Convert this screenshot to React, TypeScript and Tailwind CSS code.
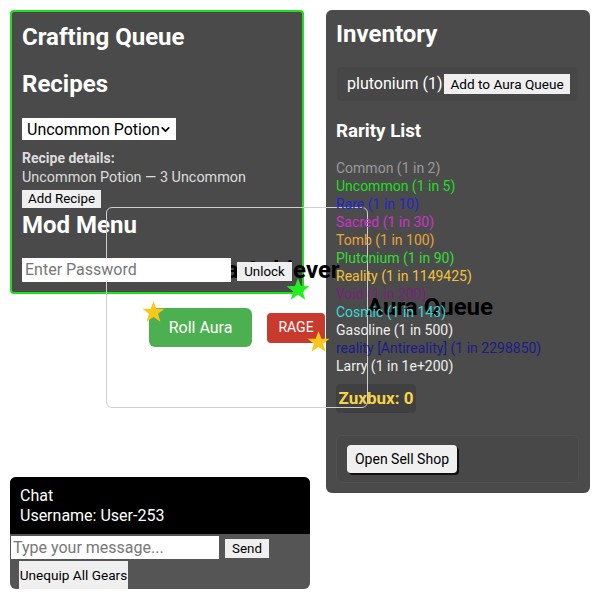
import { ChevronDown } from "lucide-react";

const RARITIES: { name: string; color: string }[] = [
  { name: "Common (1 in 2)", color: "text-[#9a9a9a]" },
  { name: "Uncommon (1 in 5)", color: "text-[#22dd22]" },
  { name: "Rare (1 in 10)", color: "text-[#2424d0]" },
  { name: "Sacred (1 in 30)", color: "text-[#cc33cc]" },
  { name: "Tomb (1 in 100)", color: "text-[#e8a43a]" },
  { name: "Plutonium (1 in 90)", color: "text-[#33dd33]" },
  { name: "Reality (1 in 1149425)", color: "text-[#f2c23a]" },
  { name: "Void (1 in 200)", color: "text-[#7d1f7d]" },
  { name: "Cosmic (1 in 143)", color: "text-[#3ad8d8]" },
  { name: "Gasoline (1 in 500)", color: "text-[#eeeeee]" },
  { name: "reality [Antireality] (1 in 2298850)", color: "text-[#1c1c88]" },
  { name: "Larry (1 in 1e+200)", color: "text-[#eeeeee]" },
];

function Star({ className }: { className: string }) {
  return (
    <svg viewBox="0 0 24 24" className={className}>
      <polygon points="12,1 15,9 23.5,9.2 16.8,14.4 19.2,22.8 12,17.8 4.8,22.8 7.2,14.4 0.5,9.2 9,9" fill="currentColor" />
    </svg>
  );
}

function CraftingPanel() {
  return (
    <div className="absolute left-[10px] top-[10px] w-[294px] h-[284px] rounded-[4px] border-2 border-[#22dd22] bg-[#4a4a4a] px-[10px] text-white">
      <h2 className="mt-[11px] text-[24px] leading-[28px] font-bold">Crafting Queue</h2>
      <h2 className="mt-[19px] text-[24px] leading-[28px] font-bold">Recipes</h2>
      <div className="relative mt-[20px] w-[154px] h-[22px] bg-white text-black">
        <select className="appearance-none w-full h-full pl-[5px] text-[16px] leading-[22px] bg-transparent outline-none">
          <option>Uncommon Potion</option>
        </select>
        <ChevronDown className="absolute right-[4px] top-[5px] w-[13px] h-[13px] pointer-events-none" strokeWidth={3} />
      </div>
      <p className="mt-[8px] text-[14px] leading-[20px] font-bold text-[#dddddd]">Recipe details:</p>
      <p className="text-[14.4px] leading-[20px] text-[#dddddd]">Uncommon Potion — 3 Uncommon</p>
      <button className="block mt-[2px] h-[18px] px-[6px] bg-[#efefef] text-black text-[13.33px] leading-[18px]">Add Recipe</button>
      <h2 className="mt-[3px] text-[24px] leading-[28px] font-bold">Mod Menu</h2>
      <div className="mt-[19px] flex items-start">
        <input
          placeholder="Enter Password"
          className="relative z-10 w-[209px] h-[24px] px-[3px] bg-white text-black text-[16px] placeholder:text-[#777] outline-none"
        />
        <button className="relative z-10 ml-[6px] mt-[4px] w-[56px] h-[19px] bg-[#efefef] text-black text-[13.33px] leading-[19px]">
          Unlock
        </button>
      </div>
    </div>
  );
}

function InventoryPanel() {
  return (
    <div className="absolute left-[326px] top-[10px] w-[264px] h-[483px] rounded-[6px] bg-[#4b4b4b] px-[10px] text-white">
      <h2 className="pt-[10px] text-[24px] leading-[28px] font-bold">Inventory</h2>
      <div className="mt-[19px] ml-[1px] w-[241px] h-[34px] rounded-[4px] bg-[#474747] flex items-center pl-[10px]">
        <span className="text-[16px]">plutonium (1)</span>
        <button className="ml-[2px] h-[20px] px-[6px] bg-[#efefef] text-black text-[13.6px] leading-[20px]">
          Add to Aura Queue
        </button>
      </div>
      <h3 className="mt-[19px] text-[18.72px] leading-[22px] font-bold">Rarity List</h3>
      <ul className="relative z-10 mt-[17px]">
        {RARITIES.map((r) => (
          <li key={r.name} className={`text-[14px] leading-[18px] whitespace-nowrap ${r.color}`}>
            {r.name}
          </li>
        ))}
      </ul>
      <div className="mt-[9px] flex items-center h-[29px] w-[80px] justify-center rounded-[4px] bg-[#404040] text-[17px] font-bold text-[#f5d547]">
        Zuxbux: 0
      </div>
      <div className="mt-[22px] w-[243px] h-[48px] rounded-[6px] border border-[#525252] bg-[#484848] flex items-center pl-[10px]">
        <button className="w-[110px] h-[28px] rounded-[4px] bg-[#f0f0f0] text-black text-[14px] shadow-[2px_2px_0_#111]">
          Open Sell Shop
        </button>
      </div>
    </div>
  );
}

function AuraBox() {
  return (
    <div className="absolute left-[106px] top-[207px] w-[262px] h-[201px] rounded-[6px] border border-[#cfcfcf]">
      <h2 className="mt-[48px] pl-[81px] text-[24px] leading-[28px] font-bold text-black whitespace-nowrap">Aura Achiever</h2>
      <div className="mt-[24px] pl-[42px] flex items-center">
        <button className="w-[103px] h-[39px] rounded-[6px] bg-[#4caf50] text-white text-[16px]">Roll Aura</button>
        <button className="ml-[15px] w-[58px] h-[30px] rounded-[4px] bg-[#c83a2e] text-white text-[14px]">RAGE</button>
      </div>
      <h2 className="absolute left-full top-[85px] text-[24px] leading-[28px] font-bold text-black whitespace-nowrap">
        Aura Queue
      </h2>
    </div>
  );
}

function ChatPanel() {
  return (
    <div className="absolute left-[10px] top-[477px] w-[300px] h-[112px] rounded-[6px] bg-[#555555] overflow-hidden">
      <div className="h-[57px] bg-black px-[10px] pt-[9px] text-white text-[16px] leading-[20px]">
        <p>Chat</p>
        <p>Username: User-253</p>
      </div>
      <div className="mt-[2px] flex items-start">
        <input
          placeholder="Type your message..."
          className="ml-[1px] w-[208px] h-[23px] px-[2px] bg-white text-black text-[16px] placeholder:text-[#777] outline-none"
        />
        <button className="ml-[6px] mt-[3px] w-[44px] h-[19px] bg-[#efefef] text-black text-[13.33px] leading-[19px]">Send</button>
      </div>
      <button className="block mt-[2px] ml-[9px] w-[109px] h-[28px] bg-[#efefef] text-black text-[13.6px]">Unequip All Gears</button>
    </div>
  );
}

export default function App() {
  return (
    <div className="relative w-[600px] h-[600px] bg-white font-['Roboto',sans-serif] overflow-hidden">
      <CraftingPanel />
      <InventoryPanel />
      <AuraBox />
      <ChatPanel />
      <Star className="absolute left-[142px] top-[300px] w-[23px] h-[23px] text-[#f7c71b]" />
      <Star className="absolute left-[286px] top-[277px] w-[24px] h-[24px] text-[#22ee22]" />
      <Star className="absolute left-[307px] top-[330px] w-[23px] h-[23px] text-[#f7c71b]" />
    </div>
  );
}
